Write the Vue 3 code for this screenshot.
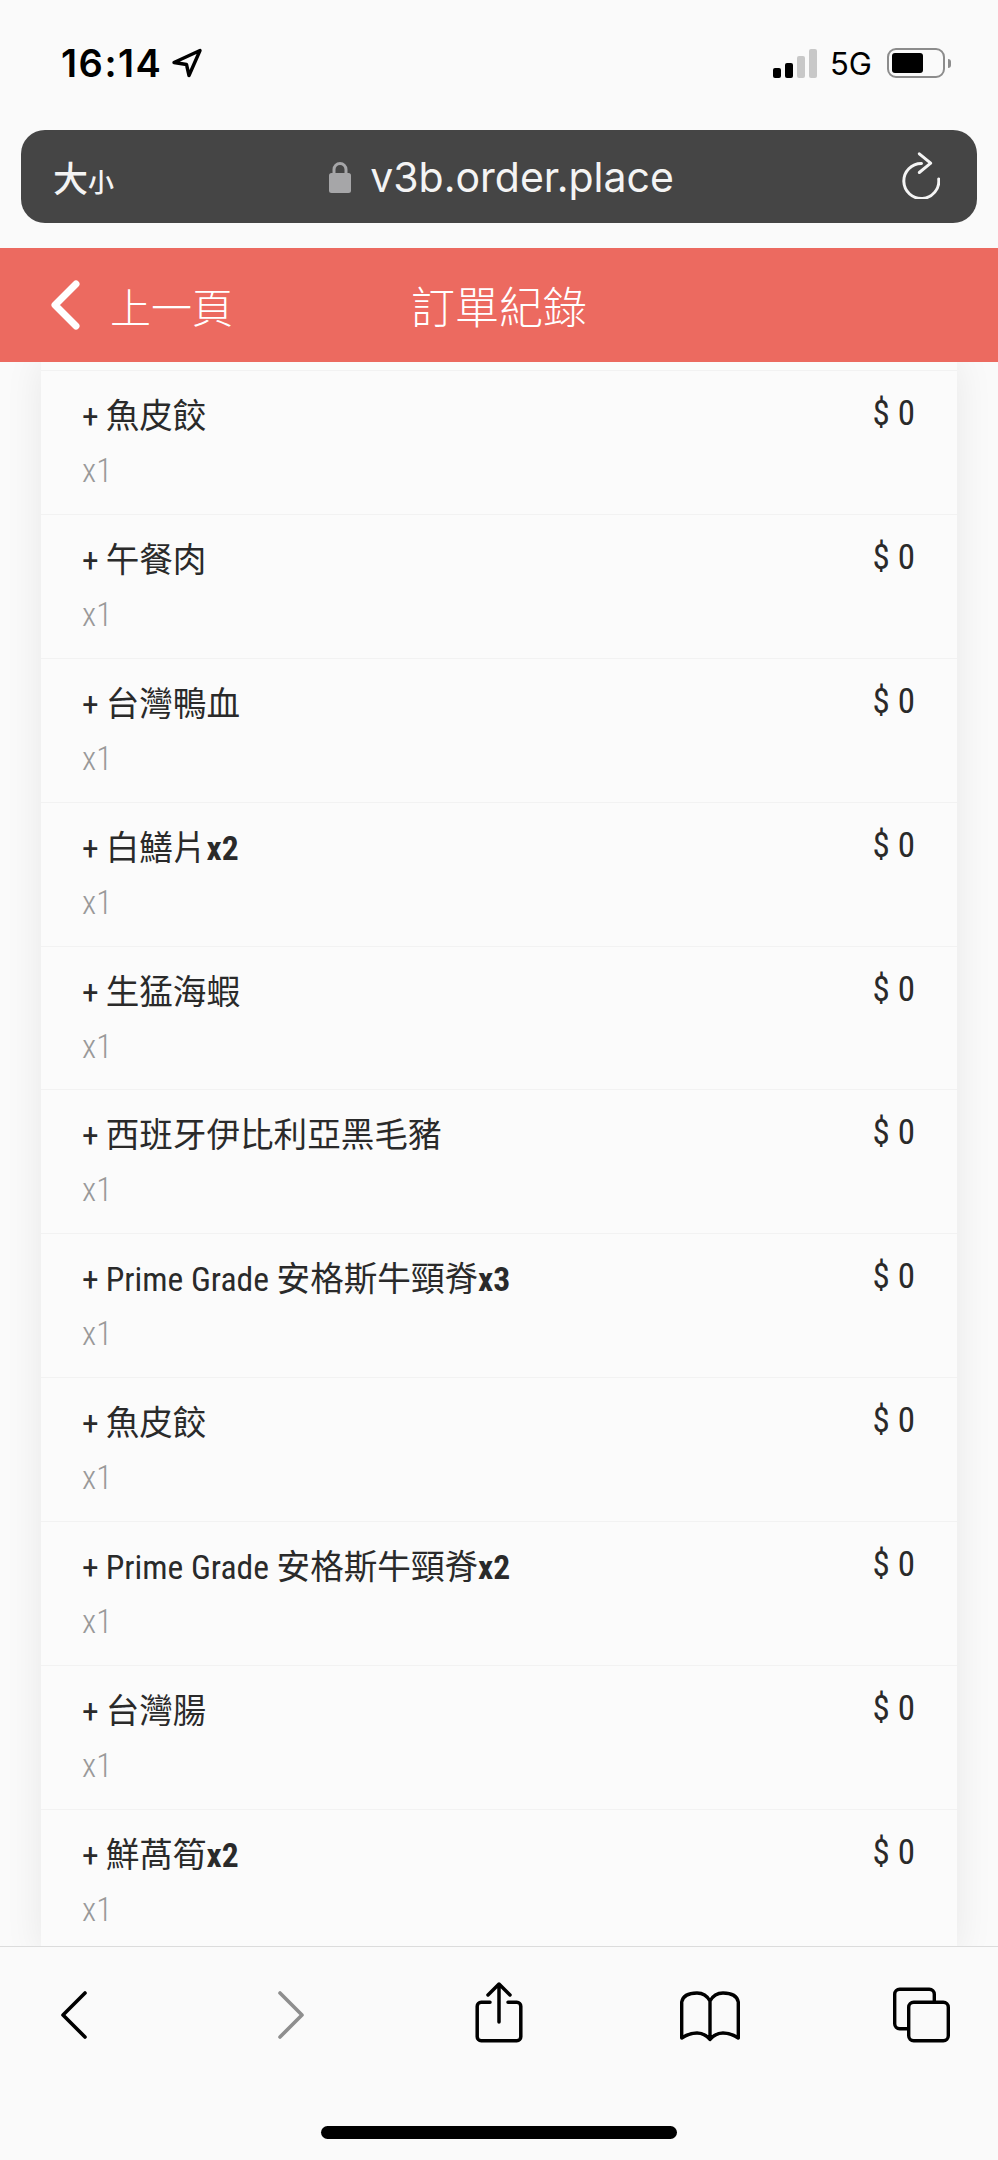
<template>
  <div class="phone">
    <div class="status-bar">
      <div class="clock">
        <span>16:14</span>
        <svg class="nav-arrow" width="32" height="30" viewBox="0 0 32 30" fill="none" stroke="#000" stroke-width="3.4" stroke-linejoin="round">
          <path d="M3 14.5 29 2.5 18 27.5 15.5 16.5Z"></path>
        </svg>
      </div>
      <div class="indicators">
        <div class="signal">
          <i class="on h1"></i><i class="on h2"></i><i class="h3"></i><i class="h4"></i>
        </div>
        <span class="net">5G</span>
        <div class="battery"><i></i></div>
        <div class="battery-nub"></div>
      </div>
    </div>

    <div class="url-wrap">
      <div class="url-bar">
        <span class="text-size">大<small>小</small></span>
        <div class="address">
          <svg width="24" height="34" viewBox="0 0 24 34" fill="none">
            <path d="M6 15V9.5a6 6 0 0 1 12 0V15" stroke="#a6a6a8" stroke-width="3"></path>
            <rect x="1" y="13" width="22" height="20" rx="2.5" fill="#a6a6a8"></rect>
          </svg>
          <span>v3b.order.place</span>
        </div>
        <svg class="reload" width="40" height="48" viewBox="0 0 40 48" fill="none" stroke="#f4f4f4" stroke-width="3" stroke-linecap="round" stroke-linejoin="round">
          <path d="M21.5 12.5A17.5 17.5 0 1 0 38.7 28"></path>
          <path d="M19.3 2.8 30.7 12.2 19.3 21.5"></path>
        </svg>
      </div>
    </div>

    <header class="page-header">
      <svg class="back" width="32" height="50" viewBox="0 0 32 50" fill="none" stroke="#fff" stroke-width="7" stroke-linecap="round" stroke-linejoin="round">
        <path d="M26 4 5 25 26 46"></path>
      </svg>
      <span class="back-label">上一頁</span>
      <h1>訂單紀錄</h1>
    </header>

    <div class="list-area">
      <div class="card">
        <div v-for="(item, i) in items" :key="i" class="row">
          <div class="row-main">
            <div class="row-name">
              <span class="plus">+</span>
              <span>{{ item.name }}</span><b v-if="item.qty">{{ item.qty }}</b>
            </div>
            <div class="row-count">x1</div>
          </div>
          <div class="row-price">$ 0</div>
        </div>
      </div>
    </div>

    <footer class="toolbar">
      <div class="tools">
        <svg viewBox="0 0 64 64" fill="none" stroke="#000" stroke-width="3.6" stroke-linecap="round" stroke-linejoin="round">
          <path d="M43 11 21 33 43 55"></path>
        </svg>
        <svg viewBox="0 0 64 64" fill="none" stroke="#8e8e8e" stroke-width="3.6" stroke-linecap="round" stroke-linejoin="round">
          <path d="M21 11 43 33 21 55"></path>
        </svg>
        <svg viewBox="0 0 64 64" fill="none" stroke="#000" stroke-width="3.5" stroke-linecap="round" stroke-linejoin="round">
          <path d="M23 20.2H14.2a4 4 0 0 0-4 4V54.8a4 4 0 0 0 4 4H49.8a4 4 0 0 0 4-4V24.2a4 4 0 0 0-4-4H41"></path>
          <path d="M32 40V2M21 13 32 2 43 13"></path>
        </svg>
        <svg viewBox="0 0 64 64" fill="none" stroke="#000" stroke-width="3.4" stroke-linecap="round" stroke-linejoin="round">
          <path d="M32 19C29 13.5 25 11 19 11 11 11 5 13.5 3.7 20V56C8 53 13 51 19 51 25 51 29 54 32 57.5 35 54 39 51 45 51 51 51 56 53 60.3 56V20C59 13.5 53 11 45 11 39 11 35 13.5 32 19V57.5"></path>
        </svg>
        <svg viewBox="0 0 64 64" fill="none" stroke="#000" stroke-width="3.4" stroke-linecap="round" stroke-linejoin="round">
          <path d="M18 46.8H10.7a5 5 0 0 1-5-5V12.2a5 5 0 0 1 5-5H40.3a5 5 0 0 1 5 5V20"></path>
          <rect x="19.7" y="20.2" width="39.6" height="38.6" rx="5"></rect>
        </svg>
      </div>
      <div class="home-bar"></div>
    </footer>
  </div>
</template>

<script setup>
const items = [
  { name: '魚皮餃' },
  { name: '午餐肉' },
  { name: '台灣鴨血' },
  { name: '白鱔片', qty: 'x2' },
  { name: '生猛海蝦' },
  { name: '西班牙伊比利亞黑毛豬' },
  { name: 'Prime Grade 安格斯牛頸脊', qty: 'x3' },
  { name: '魚皮餃' },
  { name: 'Prime Grade 安格斯牛頸脊', qty: 'x2' },
  { name: '台灣腸' },
  { name: '鮮萵筍', qty: 'x2' }
]
</script>

<style>
html,
body {
  background: #fafafa;
}
</style>

<style scoped>
.phone {
  display: flex;
  flex-direction: column;
  height: 2160px;
  overflow: hidden;
  background: #fafafa;
  font-family: Roboto, "Noto Sans CJK TC", sans-serif;
}

.status-bar {
  display: flex;
  justify-content: space-between;
  align-items: center;
  height: 130px;
  padding: 0 47px 4px 61px;
  box-sizing: border-box;
}

.clock {
  display: flex;
  align-items: center;
  gap: 9px;
  font-family: Inter, sans-serif;
  font-size: 38px;
  font-weight: 600;
  letter-spacing: 1.5px;
  color: #000;
}

.indicators {
  display: flex;
  align-items: center;
}

.signal {
  display: flex;
  align-items: flex-end;
  gap: 4px;
  height: 29px;
}

.signal i {
  width: 8px;
  border-radius: 2px;
  background: #c8c8c8;
}

.signal i.on {
  background: #000;
}

.h1 { height: 10px; }
.h2 { height: 15px; }
.h3 { height: 22px; }
.h4 { height: 29px; }

.net {
  margin: 0 15px 0 13px;
  font-family: Inter, sans-serif;
  font-size: 31px;
  color: #000;
}

.battery {
  box-sizing: border-box;
  width: 58px;
  height: 30px;
  padding: 3px;
  border: 2px solid #8c8c8c;
  border-radius: 9px;
}

.battery i {
  display: block;
  width: 31px;
  height: 20px;
  border-radius: 3px;
  background: #000;
}

.battery-nub {
  width: 3px;
  height: 9px;
  margin-left: 3px;
  border-radius: 0 3px 3px 0;
  background: #8c8c8c;
}

.url-wrap {
  height: 118px;
  padding: 0 21px;
}

.url-bar {
  display: flex;
  align-items: center;
  height: 93px;
  padding: 0 37px 0 32px;
  border-radius: 24px;
  background: #454545;
  color: #f4f4f4;
}

.text-size {
  flex-shrink: 0;
  font-size: 35px;
  font-weight: 500;
}

.text-size small {
  font-size: 26px;
}

.address {
  display: flex;
  flex: 1;
  align-items: center;
  justify-content: center;
  gap: 18px;
  padding-right: 12px;
  font-family: Inter, sans-serif;
  font-size: 41px;
}

.reload {
  flex-shrink: 0;
  margin-top: -4px;
}

.page-header {
  position: relative;
  display: flex;
  align-items: center;
  flex-shrink: 0;
  height: 114px;
  padding-left: 50px;
  box-sizing: border-box;
  background: #ec6a60;
  color: #fff;
  z-index: 2;
}

.back-label {
  margin-left: 28px;
  font-size: 41px;
  font-weight: 300;
}

.page-header h1 {
  margin: 0 0 0 178px;
  font-size: 44px;
  font-weight: 300;
}

.list-area {
  flex: 1;
  min-height: 0;
  overflow: hidden;
  padding: 0 41px;
}

.card {
  padding-top: 8px;
  background: #fbfbfb;
  box-shadow: 0 0 36px rgba(0, 0, 0, 0.08);
}

.row {
  display: flex;
  justify-content: space-between;
  box-sizing: border-box;
  height: 143.9px;
  padding: 22px 42px 0 41px;
  border-top: 1.5px solid #f2f2f2;
  color: #2a2a2a;
}

.row-name {
  font-size: 33.6px;
  line-height: 48px;
  font-stretch: 75%;
}

.row-name b {
  font-weight: 700;
}

.plus {
  margin-right: 7px;
}

.row-count {
  margin-top: 10px;
  font-size: 33px;
  font-weight: 300;
  line-height: 40px;
  color: #999;
  font-stretch: 75%;
}

.row-price {
  margin-top: -3px;
  font-size: 35px;
  line-height: 48px;
  font-stretch: 75%;
}

.toolbar {
  flex-shrink: 0;
  height: 214px;
  box-sizing: border-box;
  border-top: 1.5px solid #dcdcdc;
  background: #fafafa;
  z-index: 2;
}

.tools {
  display: grid;
  grid-template-columns: 217px 208px 211px 211px 64px;
  padding: 35px 0 0 42px;
}

.tools svg {
  display: block;
  width: 64px;
  height: 64px;
}

.home-bar {
  width: 356px;
  height: 13px;
  margin: 80px auto 0;
  border-radius: 7px;
  background: #000;
}
</style>
